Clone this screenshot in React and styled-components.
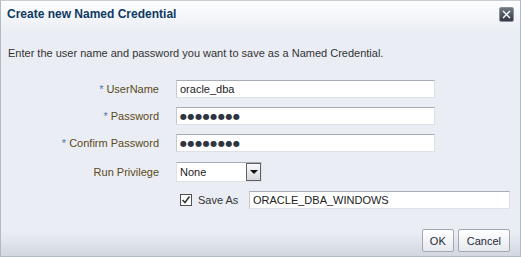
import styled, { createGlobalStyle, css } from 'styled-components'

const GlobalStyle = createGlobalStyle`
    body {
        margin: 0;
        font-family: 'Liberation Sans', Arial, sans-serif;
    }
`

const Dialog = styled.div`
    width: 521px;
    height: 257px;
    box-sizing: border-box;
    display: flex;
    flex-direction: column;
    background: #eaedf4;
    border: 1px solid #b4bac4;
    border-top-color: #c9ced6;
`

const TitleBar = styled.div`
    height: 32px;
    display: flex;
    justify-content: space-between;
    align-items: flex-start;
    padding: 6px 6px 0 6px;
    box-sizing: border-box;
    background: linear-gradient(#fdfdfe, #eaedf4);
`

const Title = styled.div`
    font-size: 12px;
    font-weight: bold;
    color: #0e3a63;
    line-height: 14px;
`

const CloseButton = styled.div`
    width: 13px;
    height: 13px;
    border-radius: 2px;
    border: 1px solid #8b929b;
    background: linear-gradient(#6f7781, #333a44);
    display: flex;
    align-items: center;
    justify-content: center;
`

const Body = styled.div`
    flex: 1;
    padding: 13px 0 0 7px;
`

const Intro = styled.div`
    font-size: 11px;
    color: #333;
    line-height: 14px;
    margin-bottom: 20px;
`

const Form = styled.div`
    display: grid;
    grid-template-columns: 151px 1fr;
    column-gap: 17px;
    row-gap: 9px;
    align-items: center;
`

const Label = styled.label`
    justify-self: end;
    font-size: 11px;
    color: #5a4a20;
`

const Star = styled.span`
    color: #4f77a8;
    margin-right: 3px;
`

const fieldBox = css`
    width: ${(p) => p.w || 259}px;
    height: 18px;
    box-sizing: border-box;
    border: 1px solid #dde1e7;
    border-top-color: #a7adb6;
    border-left-color: #c4c9d0;
    background: #fff;
    padding: 0 3px;
    margin: 0;
    color: #222;
`

const TextInput = styled.input`
    ${fieldBox}
    font-family: 'Liberation Sans', Arial, sans-serif;
    font-size: 11px;
    outline: none;
`

const PasswordField = styled.div`
    ${fieldBox}
    display: flex;
    align-items: center;
    font-family: 'DejaVu Sans', sans-serif;
    font-size: 8px;
    letter-spacing: 0.6px;
    color: #2e3440;
`

const Select = styled.div`
    width: 86px;
    height: 20px;
    box-sizing: border-box;
    display: flex;
    align-items: center;
    background: #fff;
    border: 1px solid #dde1e7;
    border-top-color: #a7adb6;
    font-size: 11px;
    color: #222;
    margin-top: 1px;
`

const SelectText = styled.span`
    flex: 1;
    padding-left: 3px;
`

const SelectButton = styled.span`
    width: 15px;
    height: 18px;
    box-sizing: border-box;
    border: 1px solid #5d6168;
    background: linear-gradient(#fbfbfc, #d4d7dc);
    display: flex;
    align-items: center;
    justify-content: center;
`

const Arrow = styled.span`
    width: 0;
    height: 0;
    border-left: 4px solid transparent;
    border-right: 4px solid transparent;
    border-top: 4px solid #111;
`

const SaveRow = styled.div`
    display: flex;
    align-items: center;
    padding-left: 4px;
`

const CheckBox = styled.span`
    width: 12px;
    height: 12px;
    box-sizing: border-box;
    border: 1px solid #4b5059;
    background: #fff;
    display: flex;
    align-items: center;
    justify-content: center;
`

const CheckLabel = styled.span`
    font-size: 11px;
    color: #333;
    margin-left: 6px;
    width: 51px;
`

const Footer = styled.div`
    height: 32px;
    display: flex;
    justify-content: flex-end;
    align-items: flex-start;
    gap: 4px;
    padding: 5px 10px 0 0;
    box-sizing: border-box;
    background: linear-gradient(#eaedf4 25%, #d2d7e0);
`

const Button = styled.button`
    height: 23px;
    margin: 0;
    padding: 0 ${(p) => p.pad || 8}px;
    border: 1px solid #a1a8b2;
    border-radius: 2px;
    background: linear-gradient(#ffffff, #e6e9ee);
    font-family: 'Liberation Sans', Arial, sans-serif;
    font-size: 11px;
    color: #1d2a3a;
    cursor: pointer;
`

function App() {
    return (
        <>
            <GlobalStyle />
            <Dialog>
                <TitleBar>
                    <Title>Create new Named Credential</Title>
                    <CloseButton>
                        <svg width="9" height="9" viewBox="0 0 9 9">
                            <path d="M1 1L8 8M8 1L1 8" stroke="#fff" strokeWidth="1.4" />
                        </svg>
                    </CloseButton>
                </TitleBar>
                <Body>
                    <Intro>Enter the user name and password you want to save as a Named Credential.</Intro>
                    <Form>
                        <Label>
                            <Star>*</Star>UserName
                        </Label>
                        <TextInput type="text" defaultValue="oracle_dba" readOnly />
                        <Label>
                            <Star>*</Star>Password
                        </Label>
                        <PasswordField>●●●●●●●●</PasswordField>
                        <Label>
                            <Star>*</Star>Confirm Password
                        </Label>
                        <PasswordField>●●●●●●●●</PasswordField>
                        <Label>Run Privilege</Label>
                        <Select>
                            <SelectText>None</SelectText>
                            <SelectButton>
                                <Arrow />
                            </SelectButton>
                        </Select>
                        <span />
                        <SaveRow>
                            <CheckBox>
                                <svg width="10" height="10" viewBox="0 0 10 10">
                                    <path d="M1.5 5L4 7.5L8.5 1.5" stroke="#333" strokeWidth="1.5" fill="none" />
                                </svg>
                            </CheckBox>
                            <CheckLabel>Save As</CheckLabel>
                            <TextInput type="text" w={261} defaultValue="ORACLE_DBA_WINDOWS" readOnly />
                        </SaveRow>
                    </Form>
                </Body>
                <Footer>
                    <Button pad={7}>OK</Button>
                    <Button pad={8}>Cancel</Button>
                </Footer>
            </Dialog>
        </>
    )
}

export default App
